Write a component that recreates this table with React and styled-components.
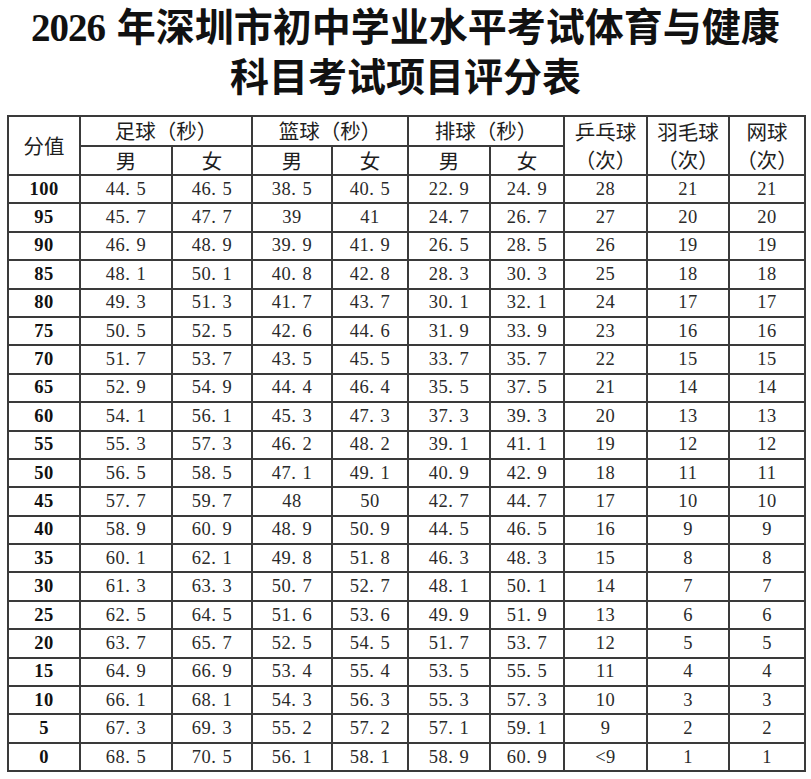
import React from 'react';
import styled, { createGlobalStyle } from 'styled-components';

const GlobalStyle = createGlobalStyle`
  html, body { margin: 0; padding: 0; background: #fff; }
  body { font-family: "Liberation Serif", "Noto Sans CJK SC", serif; color: #1e1e1e; }
`;

const Page = styled.div`
  width: 811px;
  padding: 3px 0 0 7px;
  box-sizing: border-box;
`;

const Title = styled.h1`
  margin: 0;
  width: 797px;
  text-align: center;
  font-family: "Liberation Serif", "Noto Sans CJK SC", serif;
  font-weight: 700;
  font-size: 39px;
  line-height: 50px;
  color: #111;
`;

const Year = styled.span`
  letter-spacing: -1px;
  margin-right: 2px;
`;

const Table = styled.table`
  margin-top: 12px;
  width: 797px;
  table-layout: fixed;
  border-collapse: collapse;
  border: 2px solid #333;
`;

const Col = styled.col`
  width: ${p => p.w}px;
`;

const Row = styled.tr`
  height: ${p => p.h || 28.4}px;
`;

const HeadCell = styled.th`
  border: 2px solid #3a3a3a;
  padding: 0;
  text-align: center;
  vertical-align: middle;
  font-family: "Noto Sans CJK SC", sans-serif;
  font-weight: 400;
  font-size: 20.5px;
  line-height: 27.5px;
  color: #1e1e1e;
`;

const Cell = styled.td`
  border: 2px solid #3a3a3a;
  padding: 0;
  text-align: center;
  vertical-align: middle;
  font-family: "Liberation Serif", serif;
  font-size: 18.5px;
  letter-spacing: 0.5px;
  color: #2a2a2a;
`;

const ScoreCell = styled(Cell)`
  font-weight: 700;
  color: #111;
`;

const Dot = styled.span`
  margin-right: 6px;
`;

const widths = [72, 92, 80, 80, 76, 82, 74, 83, 82, 76];

const rows = [
  [100, '44.5', '46.5', '38.5', '40.5', '22.9', '24.9', '28', '21', '21'],
  [95, '45.7', '47.7', '39', '41', '24.7', '26.7', '27', '20', '20'],
  [90, '46.9', '48.9', '39.9', '41.9', '26.5', '28.5', '26', '19', '19'],
  [85, '48.1', '50.1', '40.8', '42.8', '28.3', '30.3', '25', '18', '18'],
  [80, '49.3', '51.3', '41.7', '43.7', '30.1', '32.1', '24', '17', '17'],
  [75, '50.5', '52.5', '42.6', '44.6', '31.9', '33.9', '23', '16', '16'],
  [70, '51.7', '53.7', '43.5', '45.5', '33.7', '35.7', '22', '15', '15'],
  [65, '52.9', '54.9', '44.4', '46.4', '35.5', '37.5', '21', '14', '14'],
  [60, '54.1', '56.1', '45.3', '47.3', '37.3', '39.3', '20', '13', '13'],
  [55, '55.3', '57.3', '46.2', '48.2', '39.1', '41.1', '19', '12', '12'],
  [50, '56.5', '58.5', '47.1', '49.1', '40.9', '42.9', '18', '11', '11'],
  [45, '57.7', '59.7', '48', '50', '42.7', '44.7', '17', '10', '10'],
  [40, '58.9', '60.9', '48.9', '50.9', '44.5', '46.5', '16', '9', '9'],
  [35, '60.1', '62.1', '49.8', '51.8', '46.3', '48.3', '15', '8', '8'],
  [30, '61.3', '63.3', '50.7', '52.7', '48.1', '50.1', '14', '7', '7'],
  [25, '62.5', '64.5', '51.6', '53.6', '49.9', '51.9', '13', '6', '6'],
  [20, '63.7', '65.7', '52.5', '54.5', '51.7', '53.7', '12', '5', '5'],
  [15, '64.9', '66.9', '53.4', '55.4', '53.5', '55.5', '11', '4', '4'],
  [10, '66.1', '68.1', '54.3', '56.3', '55.3', '57.3', '10', '3', '3'],
  [5, '67.3', '69.3', '55.2', '57.2', '57.1', '59.1', '9', '2', '2'],
  [0, '68.5', '70.5', '56.1', '58.1', '58.9', '60.9', '<9', '1', '1'],
];

function Num({ value }) {
  const i = value.indexOf('.');
  if (i < 0) return value;
  return (
    <>
      {value.slice(0, i)}
      <Dot>.</Dot>
      {value.slice(i + 1)}
    </>
  );
}

export default function App() {
  return (
    <Page>
      <GlobalStyle />
      <Title>
        <Year>2026</Year> 年深圳市初中学业水平考试体育与健康
        <br />
        科目考试项目评分表
      </Title>
      <Table>
        <colgroup>
          {widths.map((w, i) => <Col key={i} w={w} />)}
        </colgroup>
        <thead>
          <Row h={28}>
            <HeadCell rowSpan={2}>分值</HeadCell>
            <HeadCell colSpan={2}>足球（秒）</HeadCell>
            <HeadCell colSpan={2}>篮球（秒）</HeadCell>
            <HeadCell colSpan={2}>排球（秒）</HeadCell>
            <HeadCell rowSpan={2}>乒乓球<br />（次）</HeadCell>
            <HeadCell rowSpan={2}>羽毛球<br />（次）</HeadCell>
            <HeadCell rowSpan={2}>网球<br />（次）</HeadCell>
          </Row>
          <Row h={29}>
            <HeadCell>男</HeadCell>
            <HeadCell>女</HeadCell>
            <HeadCell>男</HeadCell>
            <HeadCell>女</HeadCell>
            <HeadCell>男</HeadCell>
            <HeadCell>女</HeadCell>
          </Row>
        </thead>
        <tbody>
          {rows.map(([score, ...vals]) => (
            <Row key={score}>
              <ScoreCell>{score}</ScoreCell>
              {vals.map((v, i) => (
                <Cell key={i}><Num value={v} /></Cell>
              ))}
            </Row>
          ))}
        </tbody>
      </Table>
    </Page>
  );
}
